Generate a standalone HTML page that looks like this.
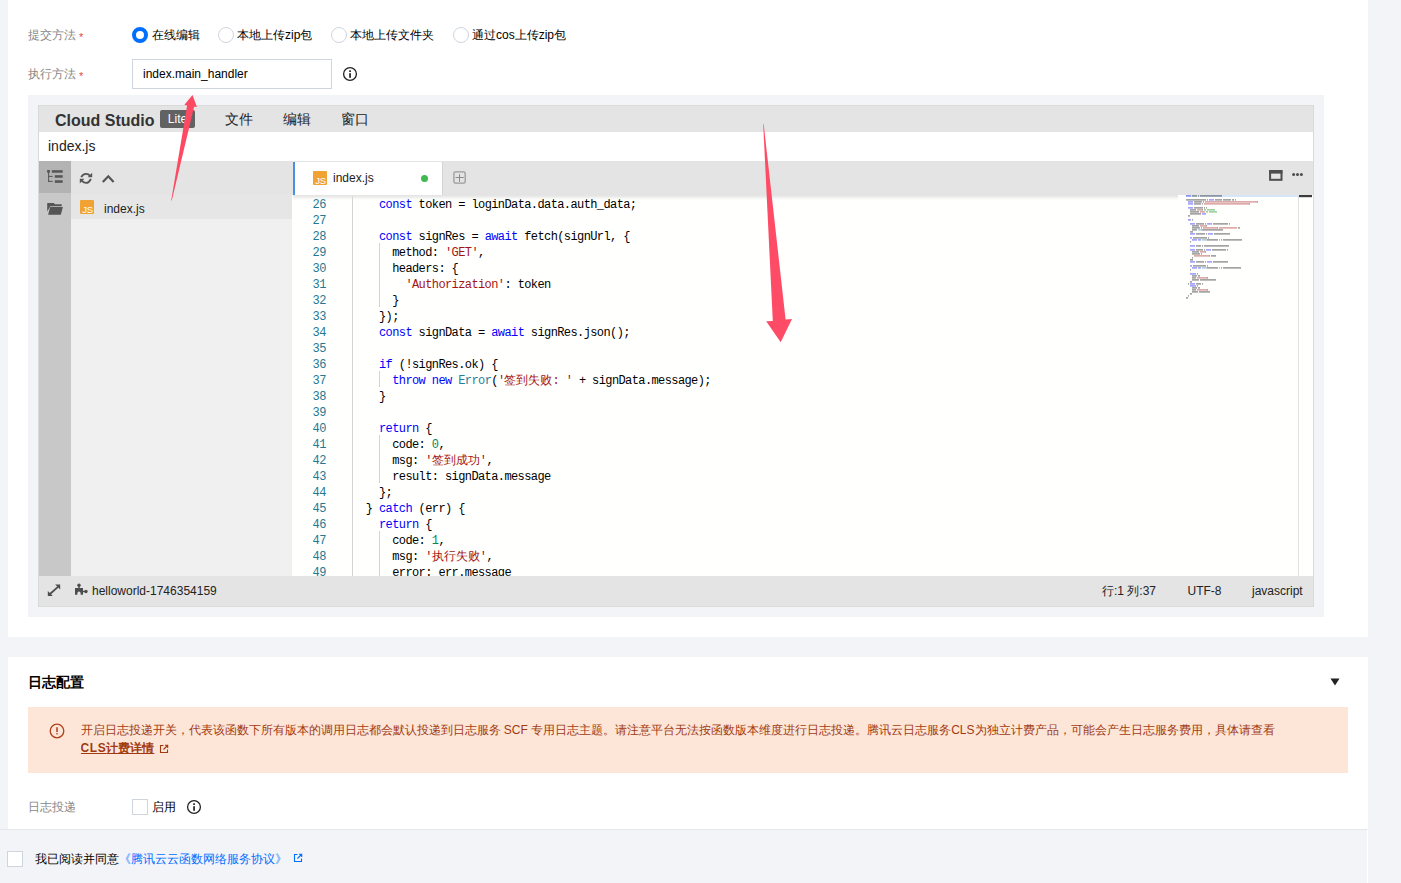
<!DOCTYPE html>
<html><head><meta charset="utf-8">
<style>
*{margin:0;padding:0;box-sizing:border-box}
html,body{width:1401px;height:883px;overflow:hidden;background:#f3f4f7;font-family:"Liberation Sans",sans-serif;font-size:12px;color:#000}
.a{position:absolute}
.card{position:absolute;background:#fff}
.lbl{position:absolute;color:#888;font-size:12px;line-height:16px;white-space:nowrap}
.star{color:#e54545;margin-left:3px;position:relative;top:2px;font-size:11px}
.radio{position:absolute;width:16px;height:16px;border-radius:50%;border:1px solid #cfd5de;background:#fff}
.radio.on{border:4px solid #006eff}
.rt{position:absolute;font-size:12px;line-height:16px;color:#000;white-space:nowrap}
.ed{position:absolute;left:38px;top:105px;width:1276px;height:501px;background:#fffffe}
.cs{font-size:16px;font-weight:bold;color:#333;line-height:18px}
.lite{width:35px;height:17.5px;background:#626262;color:#fff;border-radius:2px;font-size:12px;line-height:19px;text-align:center}
.mi{font-size:14px;line-height:18px;color:#222}
.js{width:14px;height:14px;background:#f0a232;border-radius:1px}
.js b{position:absolute;right:1px;bottom:0px;font-size:9.5px;font-weight:normal;color:#fff;line-height:9px;letter-spacing:-0.2px}
.c{letter-spacing:0}
.code{position:absolute;left:0;top:0;font-family:"Liberation Mono",monospace;font-size:12px;letter-spacing:-0.6px;line-height:16px;white-space:pre;color:#000}
.ln{position:absolute;font-family:"Liberation Mono",monospace;font-size:12px;letter-spacing:-0.6px;line-height:16px;white-space:pre;color:#237893;text-align:right}
.k{color:#0000ff}.s{color:#a31515}.n{color:#098658}.t{color:#267f99}
</style></head><body>
<!-- card 1 -->
<div class="card" style="left:8px;top:0;width:1360px;height:637px"></div>
<div class="lbl" style="left:28px;top:27px">提交方法<span class="star">*</span></div>
<div class="radio on" style="left:132px;top:27px"></div><div class="rt" style="left:152px;top:27px">在线编辑</div>
<div class="radio" style="left:218px;top:27px"></div><div class="rt" style="left:237px;top:27px">本地上传zip包</div>
<div class="radio" style="left:331px;top:27px"></div><div class="rt" style="left:350px;top:27px">本地上传文件夹</div>
<div class="radio" style="left:453px;top:27px"></div><div class="rt" style="left:472px;top:27px">通过cos上传zip包</div>

<div class="lbl" style="left:28px;top:66px">执行方法<span class="star">*</span></div>
<div class="a" style="left:132px;top:59px;width:200px;height:30px;border:1px solid #cfd5de;background:#fff"></div>
<div class="rt" style="left:143px;top:66px">index.main_handler</div>

<!-- editor outer -->
<div class="a" style="left:28px;top:95px;width:1296px;height:522px;background:#f3f4f7"></div>
<div class="ed" id="ed">
 <div class="a" style="left:0;top:0;width:1276px;height:27px;background:#e4e4e4;border-top:1px solid #d9d9d9;border-left:1px solid #d9d9d9"></div>
 <div class="a cs" style="left:17px;top:7px">Cloud Studio</div>
 <div class="a lite" style="left:122px;top:5px">Lite</div>
 <div class="a mi" style="left:187px;top:5px">文件</div>
 <div class="a mi" style="left:245px;top:5px">编辑</div>
 <div class="a mi" style="left:303px;top:5px">窗口</div>
 <div class="a" style="left:0;top:27px;width:1276px;height:29px;background:#fff;border-left:1px solid #d9d9d9"></div>
 <div class="a" style="left:10px;top:33px;font-size:14px;line-height:16px;color:#222">index.js</div>
 <!-- activity bar -->
 <div class="a" style="left:0;top:56px;width:33px;height:415px;background:#c8c8c8;border-left:1px solid #dadada"></div>
 <div class="a" style="left:1px;top:56px;width:32px;height:32px;background:#b3b3b3"></div>
 <!-- sidebar -->
 <div class="a" style="left:33px;top:56px;width:221px;height:415px;background:#f0f0f0"></div>
 <div class="a" style="left:33px;top:56px;width:221px;height:34px;background:#e4e4e4"></div>
 <div class="a" style="left:33px;top:90px;width:221px;height:24px;background:#e6e6e6"></div>
 <div class="a js" style="left:42px;top:95px"><b>JS</b></div>
 <div class="a" style="left:66px;top:96.5px;font-size:12px;line-height:14px;color:#222">index.js</div>
 <!-- tab bar -->
 <div class="a" style="left:254px;top:56px;width:1022px;height:34px;background:#e4e4e4"></div>
 <div class="a" style="left:255px;top:57px;width:150px;height:33px;background:#fff;border-left:2px solid #4a8fe0;border-right:1px solid #d4d4d4"></div>
 <div class="a js" style="left:275px;top:66px"><b>JS</b></div>
 <div class="a" style="left:295px;top:66px;font-size:12px;line-height:14px;color:#222">index.js</div>
 <div class="a" style="left:383px;top:70px;width:7px;height:7px;border-radius:50%;background:#3fb950"></div>
 <!-- code -->
 <div class="a" style="left:254px;top:90px;width:1022px;height:381px;background:#fffffe;overflow:hidden">
  <div class="ln" style="left:0;top:1.5px;width:33.8px">26
27
28
29
30
31
32
33
34
35
36
37
38
39
40
41
42
43
44
45
46
47
48
49</div>
  <div class="a" style="left:60px;top:0;width:1px;height:381px;background:#d3d3d3"></div>
  <div class="code" style="left:60.6px;top:1.5px">    <span class="k">const</span> token = loginData.data.auth_data;

    <span class="k">const</span> signRes = <span class="k">await</span> fetch(signUrl, {
      method: <span class="s">'GET'</span>,
      headers: {
        <span class="s">'Authorization'</span>: token
      }
    });
    <span class="k">const</span> signData = <span class="k">await</span> signRes.json();

    <span class="k">if</span> (!signRes.ok) {
      <span class="k">throw</span> <span class="k">new</span> <span class="t">Error</span>(<span class="s">'<span class="c">签到失败</span>: '</span> + signData.message);
    }

    <span class="k">return</span> {
      code: <span class="n">0</span>,
      msg: <span class="s">'<span class="c">签到成功</span>'</span>,
      result: signData.message
    };
  } <span class="k">catch</span> (err) {
    <span class="k">return</span> {
      code: <span class="n">1</span>,
      msg: <span class="s">'<span class="c">执行失败</span>'</span>,
      error: err.message</div>
 </div>
 <!-- status bar -->
 <div class="a" style="left:0;top:471px;width:1276px;height:31px;background:#e4e4e4"></div>
 <div class="a" style="left:0;top:0;width:1276px;height:502px;border:1px solid #dadada"></div>
 <div class="a" style="left:54px;top:477.5px;font-size:12px;line-height:16px;color:#222">helloworld-1746354159</div>
 <div class="a" style="left:1064px;top:478px;font-size:12px;line-height:16px;color:#222">行:1 列:37</div>
 <div class="a" style="left:1149.5px;top:478px;font-size:12px;line-height:16px;color:#222">UTF-8</div>
 <div class="a" style="left:1214px;top:478px;font-size:12px;line-height:16px;color:#222">javascript</div>
</div>


<svg class="a" style="left:0;top:0" width="1401" height="883" viewBox="0 0 1401 883">
 <g fill="#555">
  <!-- list icon -->
  <rect x="47.1" y="170" width="2.8" height="2.7"/>
  <rect x="48.1" y="172" width="1" height="10"/>
  <rect x="48.1" y="175.9" width="4.6" height="1"/>
  <rect x="48.1" y="180.9" width="4.6" height="1"/>
  <rect x="51.8" y="170.2" width="10.9" height="2.5"/>
  <rect x="54.8" y="175.2" width="7.9" height="2.5"/>
  <rect x="54.8" y="180.3" width="7.9" height="2.5"/>
  <!-- folder -->
  <path d="M47.2 203H53.8L55 204.3H61.7V206.2H50.3L47.2 211.5Z"/>
  <path d="M50.1 207.1H62.9L60.8 214.7H48.1Z"/>
 </g>
 <g fill="none" stroke="#555" stroke-width="1.9">
  <path d="M81.2 177.2Q82.8 173.9 86 173.9Q88.6 173.9 90.2 175.8" stroke-width="1.9"/>
  <path d="M90.8 178.8Q89.2 182.9 86 182.9Q83.4 182.9 81.8 180.4" stroke-width="1.9"/>
  <path d="M102.8 182L108.3 176.3L113.6 182" stroke-width="2.2"/>
 </g>
 <g fill="#555">
  <path d="M87.6 177.3H92.2V172.7Z"/>
  <path d="M84.4 178.8H79.8V183.4Z"/>
 </g>
 <!-- plus -->
 <rect x="453.9" y="171.9" width="11.3" height="11.3" rx="1.6" fill="none" stroke="#9a9a9a" stroke-width="1.3"/>
 <path d="M455.6 177.5H463.8M459.5 174.2V181.8" stroke="#8a8a8a" stroke-width="1"/>
 <!-- window icon -->
 <rect x="1270.1" y="171.2" width="11.4" height="8.6" fill="none" stroke="#4d4d4d" stroke-width="2"/>
 <rect x="1269.2" y="170" width="13.2" height="3.6" fill="#4d4d4d"/>
 <g fill="#4d4d4d"><circle cx="1293.6" cy="174.6" r="1.5"/><circle cx="1297.5" cy="174.6" r="1.5"/><circle cx="1301.4" cy="174.6" r="1.5"/></g>
 <!-- expand -->
 <g fill="#4d4d4d">
  <path d="M60.2 584.6V589.6L55.2 584.6Z"/>
  <path d="M47.8 596.1V591.1L52.8 596.1Z"/>
 </g>
 <path d="M58 586.8L50 594" stroke="#4d4d4d" stroke-width="1.8" fill="none"/>
 <!-- puzzle -->
 <g fill="#4d4d4d">
  <path d="M75 588H83V594.8H80.6V593A1.6 1.6 0 0 0 77.4 593V594.8H75Z"/>
  <circle cx="79" cy="585.2" r="1.7"/><rect x="78.3" y="585" width="1.4" height="3.2"/>
  <circle cx="86" cy="591.5" r="1.7"/><rect x="82.8" y="590.8" width="3.2" height="1.4"/>
 </g>
</svg>

<div class="a" style="left:293px;top:195px;width:885px;height:5px;background:linear-gradient(#e2e2e2,rgba(226,226,226,0))"></div>
<svg class="a" style="left:0;top:0" width="1401" height="883" viewBox="0 0 1401 883"><rect x="1186" y="195" width="112.5" height="2" fill="#d6e7fa"/><g opacity="0.5"><rect x="1186" y="195.3" width="5" height="1.2" fill="#0000ff"/><rect x="1192" y="195.3" width="5" height="1.2" fill="#000"/><rect x="1198" y="195.3" width="1" height="1.2" fill="#000"/><rect x="1200" y="195.3" width="7" height="1.2" fill="#000"/><rect x="1207" y="195.3" width="15" height="1.2" fill="#000"/><rect x="1186" y="199.3" width="7" height="1.2" fill="#000"/><rect x="1193" y="199.3" width="13" height="1.2" fill="#000"/><rect x="1207" y="199.3" width="1" height="1.2" fill="#000"/><rect x="1209" y="199.3" width="5" height="1.2" fill="#0000ff"/><rect x="1215" y="199.3" width="7" height="1.2" fill="#000"/><rect x="1223" y="199.3" width="7" height="1.2" fill="#000"/><rect x="1230" y="199.3" width="1" height="1.2" fill="#000"/><rect x="1232" y="199.3" width="2" height="1.2" fill="#000"/><rect x="1235" y="199.3" width="1" height="1.2" fill="#000"/><rect x="1188" y="201.3" width="5" height="1.2" fill="#0000ff"/><rect x="1194" y="201.3" width="8" height="1.2" fill="#000"/><rect x="1203" y="201.3" width="1" height="1.2" fill="#000"/><rect x="1205" y="201.3" width="52" height="1.2" fill="#a31515"/><rect x="1257" y="201.3" width="1" height="1.2" fill="#000"/><rect x="1188" y="203.3" width="5" height="1.2" fill="#0000ff"/><rect x="1194" y="203.3" width="7" height="1.2" fill="#000"/><rect x="1202" y="203.3" width="1" height="1.2" fill="#000"/><rect x="1204" y="203.3" width="45" height="1.2" fill="#a31515"/><rect x="1249" y="203.3" width="1" height="1.2" fill="#000"/><rect x="1188" y="207.3" width="5" height="1.2" fill="#0000ff"/><rect x="1194" y="207.3" width="9" height="1.2" fill="#000"/><rect x="1204" y="207.3" width="1" height="1.2" fill="#000"/><rect x="1206" y="207.3" width="1" height="1.2" fill="#000"/><rect x="1190" y="209.3" width="5" height="1.2" fill="#000"/><rect x="1195" y="209.3" width="1" height="1.2" fill="#000"/><rect x="1197" y="209.3" width="5" height="1.2" fill="#a31515"/><rect x="1202" y="209.3" width="1" height="1.2" fill="#000"/><rect x="1204" y="209.3" width="2" height="1.2" fill="#008000"/><rect x="1207" y="209.3" width="8" height="1.2" fill="#008000"/><rect x="1190" y="211.3" width="8" height="1.2" fill="#000"/><rect x="1198" y="211.3" width="1" height="1.2" fill="#000"/><rect x="1200" y="211.3" width="5" height="1.2" fill="#a31515"/><rect x="1206" y="211.3" width="2" height="1.2" fill="#008000"/><rect x="1209" y="211.3" width="8" height="1.2" fill="#008000"/><rect x="1190" y="213.3" width="10" height="1.2" fill="#000"/><rect x="1200" y="213.3" width="1" height="1.2" fill="#000"/><rect x="1202" y="213.3" width="4" height="1.2" fill="#0000ff"/><rect x="1188" y="215.3" width="2" height="1.2" fill="#000"/><rect x="1188" y="219.3" width="3" height="1.2" fill="#0000ff"/><rect x="1192" y="219.3" width="1" height="1.2" fill="#000"/><rect x="1190" y="223.3" width="5" height="1.2" fill="#0000ff"/><rect x="1196" y="223.3" width="8" height="1.2" fill="#000"/><rect x="1205" y="223.3" width="1" height="1.2" fill="#000"/><rect x="1207" y="223.3" width="5" height="1.2" fill="#0000ff"/><rect x="1213" y="223.3" width="5" height="1.2" fill="#000"/><rect x="1218" y="223.3" width="10" height="1.2" fill="#000"/><rect x="1229" y="223.3" width="1" height="1.2" fill="#000"/><rect x="1192" y="225.3" width="6" height="1.2" fill="#000"/><rect x="1198" y="225.3" width="1" height="1.2" fill="#000"/><rect x="1200" y="225.3" width="6" height="1.2" fill="#a31515"/><rect x="1206" y="225.3" width="1" height="1.2" fill="#000"/><rect x="1192" y="227.3" width="7" height="1.2" fill="#000"/><rect x="1199" y="227.3" width="1" height="1.2" fill="#000"/><rect x="1201" y="227.3" width="1" height="1.2" fill="#000"/><rect x="1203" y="227.3" width="14" height="1.2" fill="#a31515"/><rect x="1217" y="227.3" width="1" height="1.2" fill="#000"/><rect x="1219" y="227.3" width="18" height="1.2" fill="#a31515"/><rect x="1238" y="227.3" width="2" height="1.2" fill="#000"/><rect x="1192" y="229.3" width="4" height="1.2" fill="#000"/><rect x="1196" y="229.3" width="1" height="1.2" fill="#000"/><rect x="1198" y="229.3" width="4" height="1.2" fill="#267f99"/><rect x="1202" y="229.3" width="21" height="1.2" fill="#000"/><rect x="1190" y="231.3" width="3" height="1.2" fill="#000"/><rect x="1190" y="233.3" width="5" height="1.2" fill="#0000ff"/><rect x="1196" y="233.3" width="9" height="1.2" fill="#000"/><rect x="1206" y="233.3" width="1" height="1.2" fill="#000"/><rect x="1208" y="233.3" width="5" height="1.2" fill="#0000ff"/><rect x="1214" y="233.3" width="8" height="1.2" fill="#000"/><rect x="1222" y="233.3" width="8" height="1.2" fill="#000"/><rect x="1190" y="237.3" width="2" height="1.2" fill="#0000ff"/><rect x="1193" y="237.3" width="14" height="1.2" fill="#000"/><rect x="1208" y="237.3" width="1" height="1.2" fill="#000"/><rect x="1192" y="239.3" width="5" height="1.2" fill="#0000ff"/><rect x="1198" y="239.3" width="3" height="1.2" fill="#0000ff"/><rect x="1202" y="239.3" width="5" height="1.2" fill="#267f99"/><rect x="1207" y="239.3" width="11" height="1.2" fill="#000"/><rect x="1219" y="239.3" width="1" height="1.2" fill="#a31515"/><rect x="1221" y="239.3" width="1" height="1.2" fill="#000"/><rect x="1223" y="239.3" width="9" height="1.2" fill="#000"/><rect x="1232" y="239.3" width="10" height="1.2" fill="#000"/><rect x="1190" y="241.3" width="1" height="1.2" fill="#000"/><rect x="1190" y="245.3" width="5" height="1.2" fill="#0000ff"/><rect x="1196" y="245.3" width="5" height="1.2" fill="#000"/><rect x="1202" y="245.3" width="1" height="1.2" fill="#000"/><rect x="1204" y="245.3" width="9" height="1.2" fill="#000"/><rect x="1213" y="245.3" width="16" height="1.2" fill="#000"/><rect x="1190" y="249.3" width="5" height="1.2" fill="#0000ff"/><rect x="1196" y="249.3" width="7" height="1.2" fill="#000"/><rect x="1204" y="249.3" width="1" height="1.2" fill="#000"/><rect x="1206" y="249.3" width="5" height="1.2" fill="#0000ff"/><rect x="1212" y="249.3" width="5" height="1.2" fill="#000"/><rect x="1217" y="249.3" width="9" height="1.2" fill="#000"/><rect x="1227" y="249.3" width="1" height="1.2" fill="#000"/><rect x="1192" y="251.3" width="6" height="1.2" fill="#000"/><rect x="1198" y="251.3" width="1" height="1.2" fill="#000"/><rect x="1200" y="251.3" width="5" height="1.2" fill="#a31515"/><rect x="1205" y="251.3" width="1" height="1.2" fill="#000"/><rect x="1192" y="253.3" width="7" height="1.2" fill="#000"/><rect x="1199" y="253.3" width="1" height="1.2" fill="#000"/><rect x="1201" y="253.3" width="1" height="1.2" fill="#000"/><rect x="1194" y="255.3" width="15" height="1.2" fill="#a31515"/><rect x="1209" y="255.3" width="1" height="1.2" fill="#000"/><rect x="1211" y="255.3" width="5" height="1.2" fill="#000"/><rect x="1192" y="257.3" width="1" height="1.2" fill="#000"/><rect x="1190" y="259.3" width="3" height="1.2" fill="#000"/><rect x="1190" y="261.3" width="5" height="1.2" fill="#0000ff"/><rect x="1196" y="261.3" width="8" height="1.2" fill="#000"/><rect x="1205" y="261.3" width="1" height="1.2" fill="#000"/><rect x="1207" y="261.3" width="5" height="1.2" fill="#0000ff"/><rect x="1213" y="261.3" width="7" height="1.2" fill="#000"/><rect x="1220" y="261.3" width="8" height="1.2" fill="#000"/><rect x="1190" y="265.3" width="2" height="1.2" fill="#0000ff"/><rect x="1193" y="265.3" width="13" height="1.2" fill="#000"/><rect x="1207" y="265.3" width="1" height="1.2" fill="#000"/><rect x="1192" y="267.3" width="5" height="1.2" fill="#0000ff"/><rect x="1198" y="267.3" width="3" height="1.2" fill="#0000ff"/><rect x="1202" y="267.3" width="5" height="1.2" fill="#267f99"/><rect x="1207" y="267.3" width="11" height="1.2" fill="#000"/><rect x="1219" y="267.3" width="1" height="1.2" fill="#a31515"/><rect x="1221" y="267.3" width="1" height="1.2" fill="#000"/><rect x="1223" y="267.3" width="8" height="1.2" fill="#000"/><rect x="1231" y="267.3" width="10" height="1.2" fill="#000"/><rect x="1190" y="269.3" width="1" height="1.2" fill="#000"/><rect x="1190" y="273.3" width="6" height="1.2" fill="#0000ff"/><rect x="1197" y="273.3" width="1" height="1.2" fill="#000"/><rect x="1192" y="275.3" width="4" height="1.2" fill="#000"/><rect x="1196" y="275.3" width="1" height="1.2" fill="#000"/><rect x="1198" y="275.3" width="2" height="1.2" fill="#000"/><rect x="1192" y="277.3" width="3" height="1.2" fill="#000"/><rect x="1195" y="277.3" width="1" height="1.2" fill="#000"/><rect x="1197" y="277.3" width="10" height="1.2" fill="#a31515"/><rect x="1207" y="277.3" width="1" height="1.2" fill="#000"/><rect x="1192" y="279.3" width="6" height="1.2" fill="#000"/><rect x="1198" y="279.3" width="1" height="1.2" fill="#000"/><rect x="1200" y="279.3" width="8" height="1.2" fill="#000"/><rect x="1208" y="279.3" width="8" height="1.2" fill="#000"/><rect x="1190" y="281.3" width="2" height="1.2" fill="#000"/><rect x="1188" y="283.3" width="1" height="1.2" fill="#000"/><rect x="1190" y="283.3" width="5" height="1.2" fill="#0000ff"/><rect x="1196" y="283.3" width="5" height="1.2" fill="#000"/><rect x="1202" y="283.3" width="1" height="1.2" fill="#000"/><rect x="1190" y="285.3" width="6" height="1.2" fill="#0000ff"/><rect x="1197" y="285.3" width="1" height="1.2" fill="#000"/><rect x="1192" y="287.3" width="4" height="1.2" fill="#000"/><rect x="1196" y="287.3" width="1" height="1.2" fill="#000"/><rect x="1198" y="287.3" width="2" height="1.2" fill="#000"/><rect x="1192" y="289.3" width="3" height="1.2" fill="#000"/><rect x="1195" y="289.3" width="1" height="1.2" fill="#000"/><rect x="1197" y="289.3" width="10" height="1.2" fill="#a31515"/><rect x="1207" y="289.3" width="1" height="1.2" fill="#000"/><rect x="1192" y="291.3" width="5" height="1.2" fill="#000"/><rect x="1197" y="291.3" width="1" height="1.2" fill="#000"/><rect x="1199" y="291.3" width="3" height="1.2" fill="#000"/><rect x="1202" y="291.3" width="8" height="1.2" fill="#000"/><rect x="1190" y="293.3" width="2" height="1.2" fill="#000"/><rect x="1188" y="295.3" width="1" height="1.2" fill="#000"/><rect x="1186" y="297.3" width="2" height="1.2" fill="#000"/></g><rect x="1298" y="195" width="1" height="381" fill="#e2e2e2"/><rect x="1299" y="195" width="13" height="2.2" fill="#3c3c3c"/><path d="M171.2 200.6L187.1 105.4L184.4 104.7L192.5 95L196.9 107.1L194.1 106.8L171.8 200.6Z" fill="#fd4a63"/><path d="M763.2 124.3L772.8 320.9L766.2 321.3L780.7 342.3L792 319.1L785.6 319.4L763.7 124.3Z" fill="#fe4c66"/></svg>
<div class="a" style="left:378.5px;top:243px;width:1px;height:64px;background:#d3d3d3"></div><div class="a" style="left:378.5px;top:371px;width:1px;height:16px;background:#d3d3d3"></div><div class="a" style="left:378.5px;top:435px;width:1px;height:48px;background:#d3d3d3"></div><div class="a" style="left:378.5px;top:531px;width:1px;height:45px;background:#d3d3d3"></div>
<!-- card 2 -->
<div class="card" style="left:8px;top:657px;width:1360px;height:172px"></div>
<div class="a" style="left:28px;top:674px;font-size:14px;line-height:16px;font-weight:bold">日志配置</div>
<div class="a" style="left:28px;top:707px;width:1320px;height:66px;background:#fde6d8"></div>
<div class="lbl" style="left:28px;top:799px">日志投递</div>
<div class="a" style="left:132px;top:799px;width:16px;height:16px;border:1px solid #cfd5de;background:#fff"></div>
<div class="rt" style="left:152px;top:799px">启用</div>

<!-- bottom bar -->
<div class="a" style="left:0;top:829px;width:1368px;height:54px;background:#f3f4f7;border-top:1px solid #e4e7ec;border-right:1px solid #fff"></div>
<div class="a" style="left:7px;top:851px;width:16px;height:16px;border:1px solid #cfd5de;background:#fff"></div>
<div class="rt" style="left:35px;top:851px">我已阅读并同意<span style="color:#006eff">《腾讯云云函数网络服务协议》</span></div>

<svg class="a" style="left:342px;top:66px" width="16" height="16" viewBox="0 0 16 16"><circle cx="8" cy="8" r="6.4" fill="none" stroke="#222" stroke-width="1.3"/><rect x="7.2" y="4.3" width="1.7" height="1.7" fill="#222"/><rect x="7.2" y="7.2" width="1.7" height="4.6" fill="#222"/></svg>
<svg class="a" style="left:186px;top:799px" width="16" height="16" viewBox="0 0 16 16"><circle cx="8" cy="8" r="6.4" fill="none" stroke="#222" stroke-width="1.3"/><rect x="7.2" y="4.3" width="1.7" height="1.7" fill="#222"/><rect x="7.2" y="7.2" width="1.7" height="4.6" fill="#222"/></svg>
<svg class="a" style="left:49px;top:723px" width="16" height="16" viewBox="0 0 16 16"><circle cx="8" cy="8" r="6.8" fill="none" stroke="#b0401a" stroke-width="1.3"/><rect x="7.25" y="4.2" width="1.5" height="4.8" fill="#b0401a"/><rect x="7.25" y="10.2" width="1.5" height="1.2" fill="#b0401a"/></svg>
<div class="a" style="left:80.5px;top:721px;width:1260px;font-size:12px;line-height:18px;color:#a13a10;white-space:nowrap;overflow:hidden">开启日志投递开关，代表该函数下所有版本的调用日志都会默认投递到日志服务 SCF 专用日志主题。请注意平台无法按函数版本维度进行日志投递。腾讯云日志服务CLS为独立计费产品，可能会产生日志服务费用，具体请查看<br><b style="text-decoration:underline"><span style="letter-spacing:0.6px">CLS</span>计费详情</b></div>
<svg class="a" style="left:159px;top:744px" width="10" height="10" viewBox="0 0 10 10"><path d="M4.5 1.5H1.5V8.5H8.5V5.5" fill="none" stroke="#a13a10" stroke-width="1.1"/><path d="M4.5 5.5L8.5 1.5M6 1.3H8.7V4" fill="none" stroke="#a13a10" stroke-width="1.1"/></svg>
<svg class="a" style="left:293px;top:853px" width="10" height="10" viewBox="0 0 10 10"><path d="M4.5 1.5H1.5V8.5H8.5V5.5" fill="none" stroke="#006eff" stroke-width="1.1"/><path d="M4.5 5.5L8.5 1.5M6 1.3H8.7V4" fill="none" stroke="#006eff" stroke-width="1.1"/></svg>
<svg class="a" style="left:1329.7px;top:678px" width="10" height="8" viewBox="0 0 10 8"><path d="M0.5 0.5H9.5L5 7.5Z" fill="#222"/></svg>
</body></html>
